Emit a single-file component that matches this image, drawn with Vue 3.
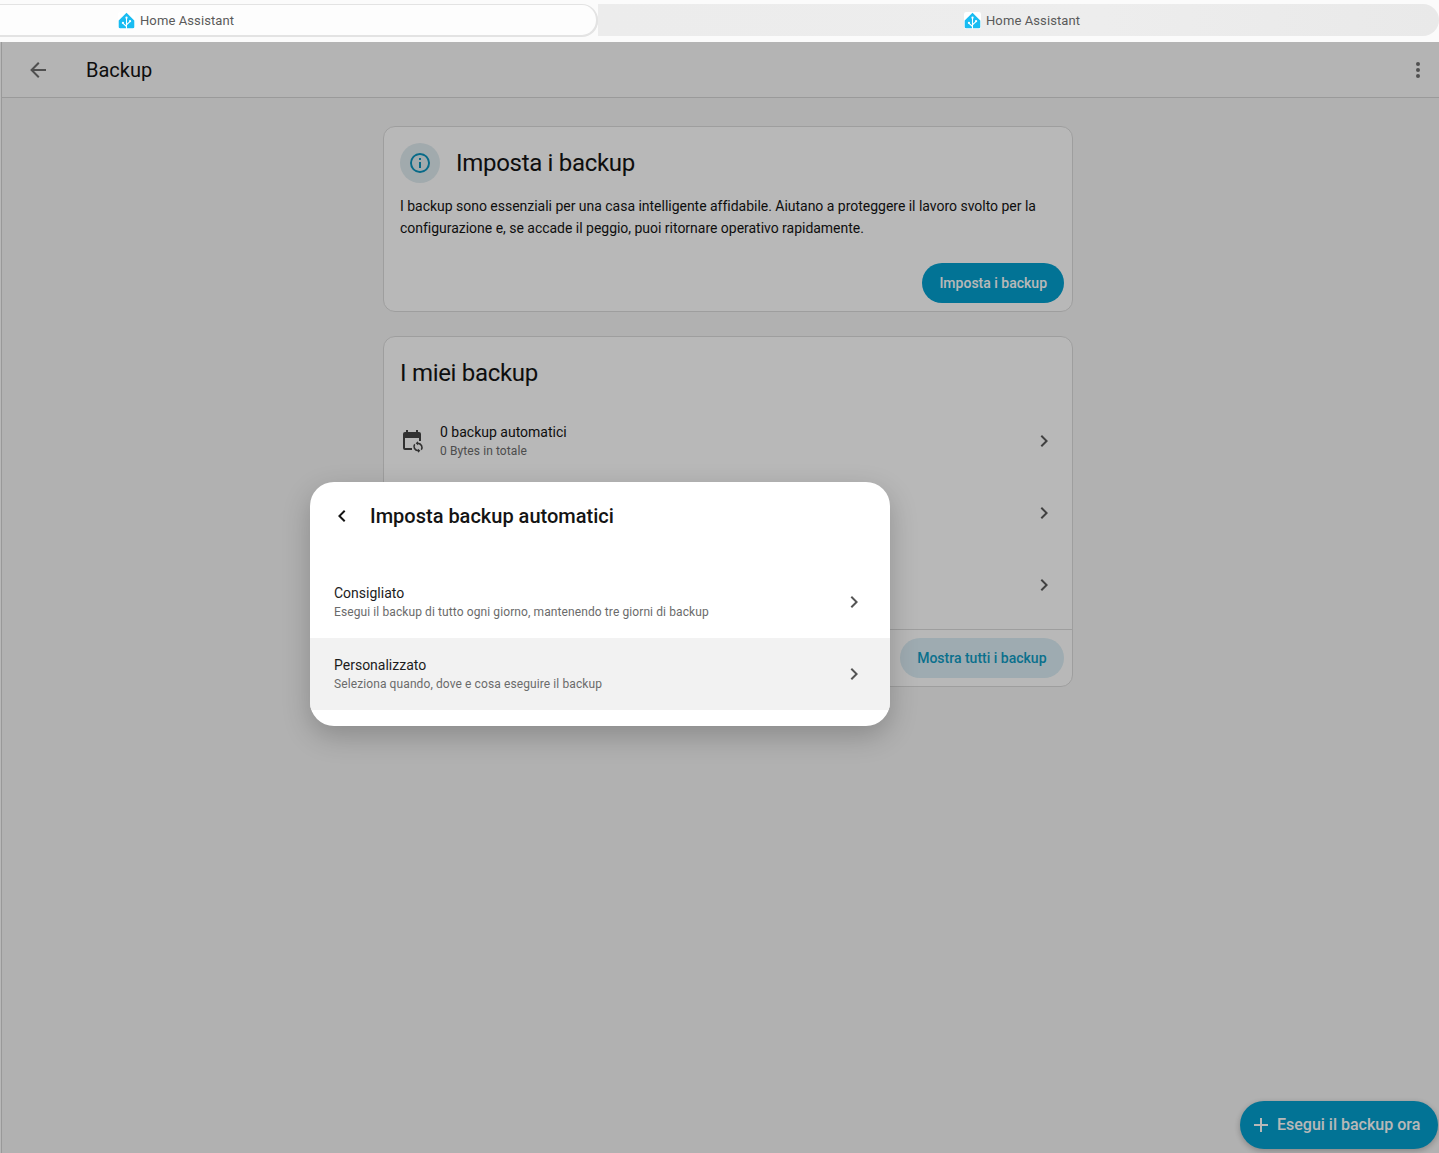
<script setup>
const icons = {
  back: 'M20,11V13H8L13.5,18.5L12.08,19.92L4.16,12L12.08,4.08L13.5,5.5L8,11H20Z',
  dots: 'M12,16A2,2 0 0,1 14,18A2,2 0 0,1 12,20A2,2 0 0,1 10,18A2,2 0 0,1 12,16M12,10A2,2 0 0,1 14,12A2,2 0 0,1 12,14A2,2 0 0,1 10,12A2,2 0 0,1 12,10M12,4A2,2 0 0,1 14,6A2,2 0 0,1 12,8A2,2 0 0,1 10,6A2,2 0 0,1 12,4Z',
  info: 'M11,9H13V7H11M12,20C7.59,20 4,16.41 4,12C4,7.59 7.59,4 12,4C16.41,4 20,7.59 20,12C20,16.41 16.41,20 12,20M12,2A10,10 0 0,0 2,12A10,10 0 0,0 12,22A10,10 0 0,0 22,12A10,10 0 0,0 12,2M11,17H13V11H11V17Z',
  right: 'M8.59,16.58L13.17,12L8.59,7.41L10,6L16,12L10,18L8.59,16.58Z',
  left: 'M15.41,16.58L10.83,12L15.41,7.41L14,6L8,12L14,18L15.41,16.58Z',
  plus: 'M19,13H13V19H11V13H5V11H11V5H13V11H19V13Z',
  calendar: 'M19 3h-1V1h-2v2H8V1H6v2H5a2 2 0 0 0-2 2v14a2 2 0 0 0 2 2h7v-2H5V9h14v3h2V5a2 2 0 0 0-2-2z',
  sync: 'M18 13.6v1.7a3.2 3.2 0 0 1 2.7 4.9l1.2 1.1A4.9 4.9 0 0 0 18 13.6v-1.4l-2.4 2 2.4 2zM18 22.4v-1.7a3.2 3.2 0 0 1-2.7-4.9l-1.2-1.1A4.9 4.9 0 0 0 18 22.4v1.4l2.4-2-2.4-2z'
}

const tabs = [
  { id: 'a', active: true },
  { id: 'b', active: false }
]

const options = [
  { title: 'Consigliato', text: 'Esegui il backup di tutto ogni giorno, mantenendo tre giorni di backup', hover: false },
  { title: 'Personalizzato', text: 'Seleziona quando, dove e cosa eseguire il backup', hover: true }
]
</script>

<template>
  <div class="app">
    <div class="tabs">
      <div v-for="tab in tabs" :key="tab.id" class="tab" :class="{ active: tab.active }">
        <svg class="logo" viewBox="0 0 24 24">
          <rect class="logo-bg" width="24" height="24" rx="3" />
          <path fill="#18bcf2" d="M12 1L23 12v9a2 2 0 0 1-2 2H3a2 2 0 0 1-2-2v-9z" />
          <path fill="none" stroke="#fff" stroke-width="1.5" stroke-linecap="round" d="M12 8v15M12 18l4.5-4M12 20.5l-4.5-4" />
          <circle cx="12" cy="8" r="1.6" fill="#fff" />
          <circle cx="17" cy="13" r="1.6" fill="#fff" />
          <circle cx="7" cy="15.5" r="1.6" fill="#fff" />
        </svg>
        <span>Home Assistant</span>
      </div>
    </div>

    <div class="page">
      <header class="topbar">
        <svg class="icon back" viewBox="0 0 24 24"><path :d="icons.back" /></svg>
        <h1>Backup</h1>
        <svg class="icon dots" viewBox="0 0 24 24"><path :d="icons.dots" /></svg>
      </header>

      <main class="content">
        <section class="card">
          <div class="setup-head">
            <div class="info-circle">
              <svg class="icon" viewBox="0 0 24 24"><path :d="icons.info" /></svg>
            </div>
            <h2>Imposta i backup</h2>
          </div>
          <p class="setup-text">I backup sono essenziali per una casa intelligente affidabile. Aiutano a proteggere il lavoro svolto per la configurazione e, se accade il peggio, puoi ritornare operativo rapidamente.</p>
          <div class="setup-actions">
            <button class="btn primary">Imposta i backup</button>
          </div>
        </section>

        <section class="card">
          <h2 class="my-title">I miei backup</h2>
          <div class="rows">
            <div class="row">
              <svg class="icon cal" viewBox="0 0 24 24"><path :d="icons.calendar" /><path :d="icons.sync" /></svg>
              <div class="row-text">
                <div class="row-title">0 backup automatici</div>
                <div class="row-sub">0 Bytes in totale</div>
              </div>
              <svg class="icon chev" viewBox="0 0 24 24"><path :d="icons.right" /></svg>
            </div>
            <div class="row">
              <svg class="icon chev" viewBox="0 0 24 24"><path :d="icons.right" /></svg>
            </div>
            <div class="row">
              <svg class="icon chev" viewBox="0 0 24 24"><path :d="icons.right" /></svg>
            </div>
          </div>
          <div class="card-footer">
            <button class="btn tonal">Mostra tutti i backup</button>
          </div>
        </section>
      </main>

      <button class="fab">
        <svg class="icon" viewBox="0 0 24 24"><path :d="icons.plus" /></svg>
        <span>Esegui il backup ora</span>
      </button>

      <div class="scrim"></div>

      <div class="dialog">
        <div class="dialog-head">
          <svg class="icon" viewBox="0 0 24 24"><path :d="icons.left" /></svg>
          <h3>Imposta backup automatici</h3>
        </div>
        <div v-for="opt in options" :key="opt.title" class="option" :class="{ hover: opt.hover }">
          <div class="option-text">
            <div class="option-title">{{ opt.title }}</div>
            <div class="option-sub">{{ opt.text }}</div>
          </div>
          <svg class="icon" viewBox="0 0 24 24"><path :d="icons.right" /></svg>
        </div>
      </div>
    </div>
  </div>
</template>

<style>
html, body {
  margin: 0;
  background: #fff;
}
</style>

<style scoped>
* {
  box-sizing: border-box;
}

.app {
  width: 1439px;
  height: 1153px;
  overflow: hidden;
  font-family: Roboto, 'Noto Sans', sans-serif;
  color: #141414;
}

.icon {
  width: 24px;
  height: 24px;
  flex: none;
  fill: currentColor;
  display: block;
}

/* browser tabs */
.tabs {
  height: 42px;
  padding: 4px 0 6px;
  display: flex;
  background: #fbfbfb;
}

.tab {
  display: flex;
  align-items: center;
  gap: 5px;
  font-size: 13px;
  letter-spacing: 0.1px;
  color: #5a5a5a;
  flex: 1;
  padding-left: 366px;
  background: linear-gradient(90deg, #ececec, #ededed 60%, #e9e9e9);
  border-radius: 0 16px 16px 0;
}

.tab.active {
  flex: none;
  width: 598px;
  padding-left: 118px;
  background: #fdfdfd;
  border: 1px solid #e3e3e3;
  border-width: 1px 2px 1px 0;
  box-shadow: 0 1px 0 #e3e3e3;
  border-radius: 0 16px 16px 0;
}

.logo {
  width: 17px;
  height: 17px;
  flex: none;
}

.logo-bg {
  fill: #fff;
}

/* page */
.page {
  position: relative;
  height: 1111px;
  background: #f6f6f6;
  border-left: 1px solid #d4d4d4;
  margin-left: 1px;
}

.topbar {
  height: 56px;
  display: flex;
  align-items: center;
  background: #fafafa;
  border-bottom: 1px solid #d6d6d6;
  padding: 0 9px 0 24px;
}

.topbar h1 {
  flex: 1;
  margin: 0 0 0 36px;
  font-size: 20px;
  font-weight: 400;
}

.back,
.dots {
  color: #6f6f6f;
}

.content {
  width: 690px;
  margin: 28px 0 0 381px;
  display: flex;
  flex-direction: column;
  gap: 24px;
}

.card {
  background: #fff;
  border: 1px solid #dcdcdc;
  border-radius: 12px;
}

.setup-head {
  display: flex;
  align-items: center;
  gap: 16px;
  padding: 16px 16px 0;
}

.info-circle {
  width: 40px;
  height: 40px;
  border-radius: 50%;
  display: flex;
  align-items: center;
  justify-content: center;
  background: #e0ecf0;
  color: #0b93bd;
}

.card h2 {
  margin: 0;
  font-size: 24px;
  font-weight: 400;
  letter-spacing: -0.3px;
}

.setup-text {
  margin: 12px 16px 0;
  font-size: 14px;
  line-height: 22px;
  letter-spacing: -0.02px;
}

.setup-actions {
  display: flex;
  justify-content: flex-end;
  padding: 24px 8px 8px;
}

.btn {
  height: 40px;
  border: none;
  border-radius: 20px;
  padding: 0 17px;
  font: 500 14px Roboto, sans-serif;
}

.primary {
  background: #03a0cf;
  color: #fff;
}

.tonal {
  background: #dbeef5;
  color: #0f9bc4;
  padding: 0 17.5px;
}

.card .my-title {
  height: 68px;
  padding: 20px 16px 0;
  line-height: 32px;
}

.rows {
  padding-bottom: 8px;
}

.row {
  height: 72px;
  display: flex;
  align-items: center;
  justify-content: flex-end;
  padding: 0 16px;
}

.cal {
  color: #444;
}

.row-text {
  flex: 1;
  margin-left: 16px;
}

.row-title {
  font-size: 14px;
  line-height: 20px;
  margin: -1px 0 1px;
}

.row-sub {
  font-size: 12px;
  line-height: 16px;
  letter-spacing: 0.1px;
  color: #6b6b6b;
}

.chev {
  color: #5a5a5a;
}

.card-footer {
  display: flex;
  justify-content: flex-end;
  padding: 8px;
  border-top: 1px solid #dcdcdc;
}

.fab {
  position: absolute;
  right: 1px;
  bottom: 4px;
  height: 48px;
  width: 198px;
  display: flex;
  align-items: center;
  gap: 4px;
  padding: 0 0 2px 9px;
  border: none;
  border-radius: 24px;
  background: #03a0cf;
  color: #fff;
  font: 500 16px Roboto, sans-serif;
  white-space: nowrap;
  box-shadow: 0 2px 6px rgba(0, 0, 0, 0.25);
}

.fab .icon {
  margin-top: 2px;
}

/* dialog */
.scrim {
  position: absolute;
  inset: 0 0 0 -2px;
  background: rgba(0, 0, 0, 0.28);
}

.dialog {
  position: absolute;
  left: 308px;
  top: 440px;
  width: 580px;
  padding-bottom: 16px;
  background: #fff;
  border-radius: 24px;
  box-shadow: 0 10px 28px rgba(0, 0, 0, 0.22);
  overflow: hidden;
}

.dialog-head {
  height: 84px;
  display: flex;
  align-items: flex-start;
  gap: 16px;
  padding: 22px 20px 0 20px;
}

.dialog-head h3 {
  margin: 0;
  font-size: 20px;
  line-height: 24px;
  font-weight: 500;
}

.option {
  height: 72px;
  display: flex;
  align-items: center;
  padding: 0 24px;
  color: #555;
}

.option.hover {
  background: #f2f2f2;
}

.option-text {
  flex: 1;
}

.option-title {
  font-size: 14px;
  line-height: 20px;
  margin: -1px 0 1px;
  color: #1c1c1c;
}

.option-sub {
  font-size: 12px;
  line-height: 16px;
  letter-spacing: 0.1px;
  color: #6b6b6b;
}
</style>
